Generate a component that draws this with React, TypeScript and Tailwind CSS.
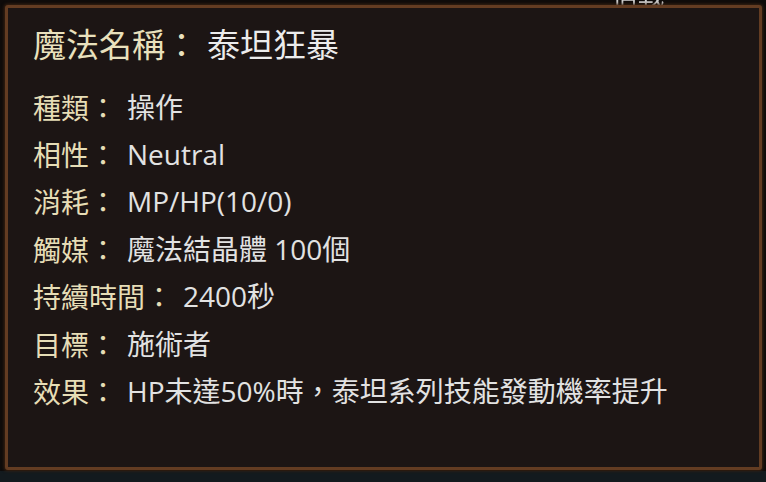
import React from "react";

const rows: [string, string][] = [
  ["種類", "操作"],
  ["相性", "Neutral"],
  ["消耗", "MP/HP(10/0)"],
  ["觸媒", "魔法結晶體 100個"],
  ["持續時間", "2400秒"],
  ["目標", "施術者"],
  ["效果", "HP未達50%時，泰坦系列技能發動機率提升"],
];

const valueFont = { fontFamily: '"Open Sans", "Noto Sans CJK TC", sans-serif' };

export default function App() {
  return (
    <div
      className="relative w-[766px] h-[482px] overflow-hidden bg-[#0e0b0a] flex flex-col"
      style={{ fontFamily: '"Noto Sans CJK TC", "Noto Sans", sans-serif' }}
    >
      <div className="absolute left-[612px] top-[-20px] text-[26px] leading-[28px] text-[#cfcfcf] blur-[0.6px]">
        信戰
      </div>
      <div className="relative ml-[5px] mt-[5px] w-[757px] h-[465px] rounded-[3px] border-[3px] border-[#633c22] bg-[#1c1514] pl-[25px] pt-[12px] shadow-[0_0_3px_1px_#3a2212]">
        <div className="flex items-baseline text-[33px] leading-[46px] text-[#e9e1bd] whitespace-nowrap">
          <span>魔法名稱：</span>
          <span className="ml-[9px] text-[#ececec]">泰坦狂暴</span>
        </div>
        <div className="mt-[17px] flex flex-col">
          {rows.map(([k, v]) => (
            <div key={k} className="flex h-[47.4px] items-center text-[28px] leading-[40px] whitespace-nowrap">
              <span className="text-[#e6ddb6]">{k}：</span>
              <span className="ml-[10px] text-[#e2e2e2]" style={valueFont}>
                {v}
              </span>
            </div>
          ))}
        </div>
      </div>
      <div className="flex-1 bg-[#131a1e] mt-[1px]" />
    </div>
  );
}
